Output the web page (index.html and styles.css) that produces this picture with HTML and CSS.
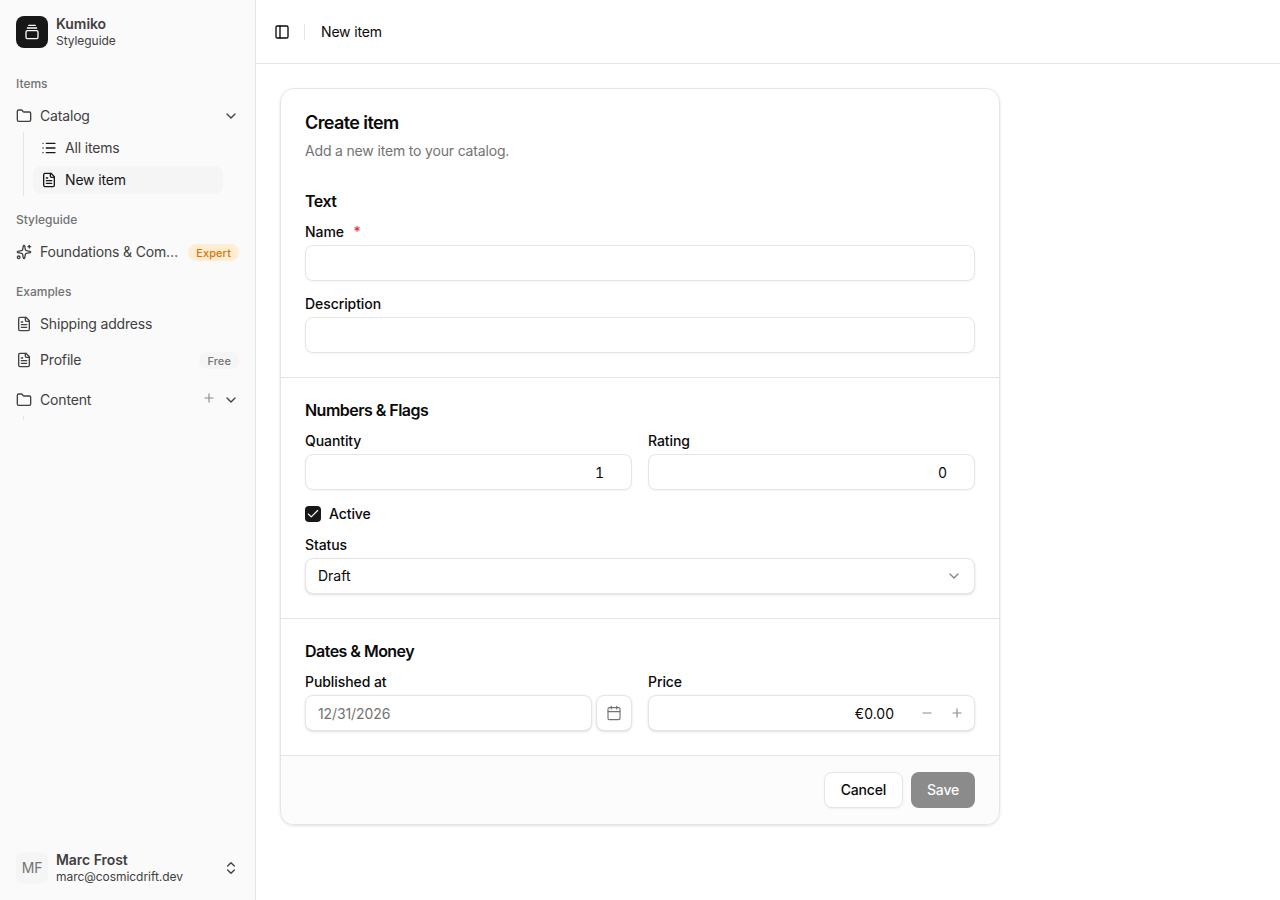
FILE: index.html
```html
<!DOCTYPE html>
<html lang="en">
<head>
  <meta charset="UTF-8" />
  <meta name="viewport" content="width=device-width, initial-scale=1.0">
  <title>Kumiko Styleguide - New item</title>
  <link rel="stylesheet" href="styles.css">
</head>
<body>
  <!-- Shared icons -->
  <svg class="icon-defs" width="0" height="0">
    <symbol id="folder" viewBox="0 0 24 24"><path d="M20 20a2 2 0 0 0 2-2V8a2 2 0 0 0-2-2h-7.900a2 2 0 0 1-1.690-.900L9.600 3.900A2 2 0 0 0 7.930 3H4a2 2 0 0 0-2 2v13a2 2 0 0 0 2 2Z"/></symbol>
    <symbol id="chevron-down" viewBox="0 0 24 24"><path d="m6 9 6 6 6-6"/></symbol>
    <symbol id="file-text" viewBox="0 0 24 24"><path d="M15 2H6a2 2 0 0 0-2 2v16a2 2 0 0 0 2 2h12a2 2 0 0 0 2-2V7Z"/><path d="M14 2v4a2 2 0 0 0 2 2h4"/><path d="M10 9H8"/><path d="M16 13H8"/><path d="M16 17H8"/></symbol>
    <symbol id="plus" viewBox="0 0 24 24"><path d="M5 12h14"/><path d="M12 5v14"/></symbol>
  </svg>

  <div class="sidebar">
    <div class="brand">
      <div class="brand-logo">
        <svg class="icon" viewBox="0 0 24 24"><path d="M7 2h10"/><path d="M5 6h14"/><rect width="18" height="12" x="3" y="10" rx="2"/></svg>
      </div>
      <div class="two-lines">
        <div class="line-title">Kumiko</div>
        <div class="line-sub">Styleguide</div>
      </div>
    </div>

    <div class="nav">
      <div class="nav-group">
        <div class="nav-label">Items</div>
        <a class="nav-item">
          <svg class="icon"><use href="#folder"/></svg>
          <span class="nav-text">Catalog</span>
          <svg class="icon"><use href="#chevron-down"/></svg>
        </a>
        <div class="nav-sub">
          <a class="nav-sub-item">
            <svg class="icon" viewBox="0 0 24 24"><path d="M3 12h.010"/><path d="M3 19h.010"/><path d="M3 5h.010"/><path d="M8 12h13"/><path d="M8 19h13"/><path d="M8 5h13"/></svg>
            <span>All items</span>
          </a>
          <a class="nav-sub-item active">
            <svg class="icon"><use href="#file-text"/></svg>
            <span>New item</span>
          </a>
        </div>
      </div>

      <div class="nav-group">
        <div class="nav-label">Styleguide</div>
        <a class="nav-item">
          <svg class="icon" viewBox="0 0 24 24"><path d="M11.017 2.814a1 1 0 0 1 1.966 0l1.051 5.558a2 2 0 0 0 1.594 1.594l5.558 1.051a1 1 0 0 1 0 1.966l-5.558 1.051a2 2 0 0 0-1.594 1.594l-1.051 5.558a1 1 0 0 1-1.966 0l-1.051-5.558a2 2 0 0 0-1.594-1.594l-5.558-1.051a1 1 0 0 1 0-1.966l5.558-1.051a2 2 0 0 0 1.594-1.594z"/><path d="M20 2v4"/><path d="M22 4h-4"/><circle cx="4" cy="20" r="2"/></svg>
          <span class="nav-text">Foundations &amp; Com…</span>
          <span class="badge badge-expert">Expert</span>
        </a>
      </div>

      <div class="nav-group">
        <div class="nav-label">Examples</div>
        <a class="nav-item">
          <svg class="icon"><use href="#file-text"/></svg>
          <span class="nav-text">Shipping address</span>
        </a>
        <a class="nav-item">
          <svg class="icon"><use href="#file-text"/></svg>
          <span class="nav-text">Profile</span>
          <span class="badge">Free</span>
        </a>
      </div>

      <div class="nav-group">
        <a class="nav-item">
          <svg class="icon"><use href="#folder"/></svg>
          <span class="nav-text">Content</span>
          <svg class="icon icon-add"><use href="#plus"/></svg>
          <svg class="icon"><use href="#chevron-down"/></svg>
        </a>
        <div class="nav-sub"></div>
      </div>
    </div>

    <div class="user">
      <div class="avatar">MF</div>
      <div class="two-lines">
        <div class="line-title">Marc Frost</div>
        <div class="line-sub">marc@cosmicdrift.dev</div>
      </div>
      <svg class="icon" viewBox="0 0 24 24"><path d="m7 15 5 5 5-5"/><path d="m7 9 5-5 5 5"/></svg>
    </div>
  </div>

  <div class="main">
    <div class="header">
      <svg class="icon" viewBox="0 0 24 24"><rect width="18" height="18" x="3" y="3" rx="2"/><path d="M9 3v18"/></svg>
      <div class="separator"></div>
      <div class="header-title">New item</div>
    </div>

    <div class="content">
      <form class="card">
        <div class="card-header">
          <h1>Create item</h1>
          <p>Add a new item to your catalog.</p>
        </div>

        <div class="section">
          <h2>Text</h2>
          <div class="fields">
            <div class="field">
              <label for="name">Name <span class="required">*</span></label>
              <input class="input" type="text" id="name">
            </div>
            <div class="field">
              <label for="description">Description</label>
              <input class="input" type="text" id="description">
            </div>
          </div>
        </div>

        <div class="section">
          <h2>Numbers &amp; Flags</h2>
          <div class="fields">
            <div class="field-row">
              <div class="field">
                <label for="quantity">Quantity</label>
                <input class="input number" type="text" id="quantity" value="1">
              </div>
              <div class="field">
                <label for="rating">Rating</label>
                <input class="input number" type="text" id="rating" value="0">
              </div>
            </div>
            <div class="check-row">
              <span class="checkbox">
                <svg class="icon" viewBox="0 0 24 24"><path d="M20 6 9 17l-5-5"/></svg>
              </span>
              <label>Active</label>
            </div>
            <div class="field">
              <label>Status</label>
              <div class="input raised select">
                <span>Draft</span>
                <svg class="icon"><use href="#chevron-down"/></svg>
              </div>
            </div>
          </div>
        </div>

        <div class="section">
          <h2>Dates &amp; Money</h2>
          <div class="field-row">
            <div class="field">
              <label for="published">Published at</label>
              <div class="date-row">
                <input class="input raised" type="text" id="published" placeholder="12/31/2026">
                <button type="button" class="calendar-button">
                  <svg class="icon" viewBox="0 0 24 24"><path d="M8 2v4"/><path d="M16 2v4"/><rect width="18" height="18" x="3" y="4" rx="2"/><path d="M3 10h18"/></svg>
                </button>
              </div>
            </div>
            <div class="field">
              <label for="price">Price</label>
              <div class="input raised money">
                <input type="text" id="price" value="€0.00">
                <svg class="icon" viewBox="0 0 24 24"><path d="M5 12h14"/></svg>
                <svg class="icon"><use href="#plus"/></svg>
              </div>
            </div>
          </div>
        </div>

        <div class="card-footer">
          <button type="button" class="button">Cancel</button>
          <button type="submit" class="button primary" disabled>Save</button>
        </div>
      </form>
    </div>
  </div>
</body>
</html>
```

FILE: styles.css
```css
* {
  margin: 0;
  padding: 0;
  box-sizing: border-box;
}
body {
  display: flex;
  height: 100vh;
  overflow: hidden;
  background-color: #fff;
  color: #0a0a0a;
  font-family: Inter, 'Liberation Sans', sans-serif;
  font-size: 14px;
  line-height: 20px;
  letter-spacing: -0.17px;
  -webkit-font-smoothing: antialiased;
}
input,
button {
  font: inherit;
  color: inherit;
  letter-spacing: -0.1px;
}
.icon-defs {
  display: none;
}
.icon {
  width: 16px;
  height: 16px;
  flex-shrink: 0;
  fill: none;
  stroke: currentColor;
  stroke-width: 2;
  stroke-linecap: round;
  stroke-linejoin: round;
}

/* Sidebar */
.sidebar {
  width: 256px;
  flex-shrink: 0;
  display: flex;
  flex-direction: column;
  background-color: #fafafa;
  border-right: 1px solid #e5e5e5;
  color: #404040;
}
.brand,
.user {
  display: flex;
  align-items: center;
  gap: 8px;
  height: 64px;
  padding: 0 16px;
}
.brand-logo,
.avatar {
  display: flex;
  align-items: center;
  justify-content: center;
  width: 32px;
  height: 32px;
  flex-shrink: 0;
  border-radius: 8px;
}
.brand-logo {
  background-color: #171717;
  color: #fafafa;
}
.avatar {
  background-color: #f5f5f5;
  color: #737373;
}
.two-lines {
  flex: 1;
}
.line-title {
  font-weight: 600;
  line-height: 18px;
  letter-spacing: -0.05px;
}
.line-sub {
  font-size: 12px;
  line-height: 16px;
  letter-spacing: -0.05px;
}
.nav {
  flex: 1;
  padding: 4px 16px 0 16px;
}
.nav-group {
  margin-bottom: 8px;
}
.nav-label {
  font-size: 12px;
  font-weight: 500;
  line-height: 32px;
  letter-spacing: 0;
  color: #737373;
}
.nav-item {
  display: flex;
  align-items: center;
  gap: 8px;
  height: 32px;
}
.nav-item + .nav-item {
  margin-top: 4px;
}
.nav-text {
  flex: 1;
  white-space: nowrap;
}
.nav-sub {
  display: flex;
  flex-direction: column;
  gap: 4px;
  margin: 0 16px 0 7px;
  padding: 2px 0 2px 9px;
  border-left: 1px solid #e5e5e5;
}
.nav-sub-item {
  display: flex;
  align-items: center;
  gap: 8px;
  height: 28px;
  padding: 0 8px;
  border-radius: 8px;
}
.nav-sub-item .icon {
  color: #171717;
}
.nav-sub-item.active {
  background-color: #f5f5f5;
  color: #171717;
}
.badge {
  margin-top: 1px;
  padding: 1px 8px 0;
  border-radius: 9px;
  background-color: #f5f5f5;
  color: #737373;
  font-size: 11px;
  font-weight: 500;
  line-height: 16px;
  letter-spacing: 0.1px;
}
.badge-expert {
  background-color: #ffedd4;
  color: #e17100;
}
.icon-add {
  width: 14px;
  height: 14px;
  margin: -4px -1px 0 0;
  color: #8c8c8c;
}

/* Main area */
.main {
  flex: 1;
}
.header {
  display: flex;
  align-items: center;
  height: 64px;
  padding: 0 18px;
  border-bottom: 1px solid #e5e5e5;
}
.separator {
  width: 1px;
  height: 16px;
  margin: 0 16px 0 14px;
  background-color: #e5e5e5;
}
.content {
  padding: 24px;
}

/* Form card */
.card {
  width: 720px;
  border: 1px solid #e5e5e5;
  border-radius: 14px;
  overflow: hidden;
  box-shadow: 0 1px 3px rgba(0, 0, 0, 0.1), 0 1px 2px -1px rgba(0, 0, 0, 0.1);
}
.card-header {
  padding: 25px 24px 8px;
}
.card-header h1 {
  font-size: 18px;
  font-weight: 600;
  line-height: 18px;
  letter-spacing: -0.6px;
}
.card-header p {
  margin-top: 9px;
  color: #737373;
}
.section {
  padding: 20px 24px 24px;
}
.section + .section {
  border-top: 1px solid #e5e5e5;
}
.section h2 {
  margin-bottom: 12px;
  font-size: 16px;
  font-weight: 600;
  line-height: 24px;
  letter-spacing: -0.53px;
}
.fields {
  display: flex;
  flex-direction: column;
  gap: 16px;
}
.field-row {
  display: flex;
  gap: 16px;
}
.field {
  flex: 1;
  display: flex;
  flex-direction: column;
  gap: 6px;
}
label {
  font-weight: 500;
  line-height: 14px;
  letter-spacing: -0.08px;
}
.required {
  margin-left: 6px;
  color: #fb2c36;
}
.input {
  width: 100%;
  height: 36px;
  padding: 1px 12px 0;
  background-color: #fff;
  border: 1px solid #e5e5e5;
  border-radius: 8px;
  box-shadow: 0 1px 2px rgba(0, 0, 0, 0.05);
  outline: none;
}
.input::placeholder {
  color: #737373;
}
.raised,
.calendar-button {
  box-shadow: 0 1px 3px rgba(0, 0, 0, 0.1), 0 1px 2px -1px rgba(0, 0, 0, 0.1);
}
.number {
  padding-right: 27px;
  text-align: right;
  font-variant-numeric: tabular-nums;
}
.check-row {
  display: flex;
  align-items: center;
  gap: 8px;
}
.checkbox {
  display: flex;
  align-items: center;
  justify-content: center;
  width: 16px;
  height: 16px;
  border-radius: 4px;
  background-color: #171717;
  color: #fafafa;
}
.checkbox .icon {
  width: 14px;
  height: 14px;
}
.select {
  display: flex;
  align-items: center;
  justify-content: space-between;
  padding-top: 0;
  letter-spacing: 0;
}
.select .icon {
  color: #858585;
}
.date-row {
  display: flex;
  gap: 4px;
}
.calendar-button {
  display: flex;
  align-items: center;
  justify-content: center;
  width: 36px;
  height: 36px;
  flex-shrink: 0;
  background-color: #fff;
  border: 1px solid #e5e5e5;
  border-radius: 8px;
  color: #737373;
}
.calendar-button .icon {
  stroke-width: 1.7;
}
.money {
  display: flex;
  align-items: center;
  padding: 0 10px 0 12px;
  color: #8c8c8c;
}
.money input {
  flex: 1;
  min-width: 0;
  margin-right: 26px;
  padding-top: 2px;
  border: none;
  outline: none;
  background: none;
  color: #0a0a0a;
  letter-spacing: 0;
  text-align: right;
}
.money .icon {
  width: 14px;
  height: 14px;
}
.money .icon + .icon {
  margin-left: 16px;
}
.card-footer {
  display: flex;
  justify-content: flex-end;
  gap: 8px;
  padding: 16px 24px;
  background-color: #fcfcfc;
  border-top: 1px solid #e5e5e5;
}
.button {
  height: 36px;
  padding: 0 16px;
  background-color: #fff;
  border: 1px solid #e5e5e5;
  border-radius: 8px;
  box-shadow: 0 1px 2px rgba(0, 0, 0, 0.05);
  font-weight: 500;
  letter-spacing: -0.2px;
}
.button.primary {
  border: none;
  box-shadow: none;
  background-color: #8b8b8b;
  color: #fbfbfb;
}
```
